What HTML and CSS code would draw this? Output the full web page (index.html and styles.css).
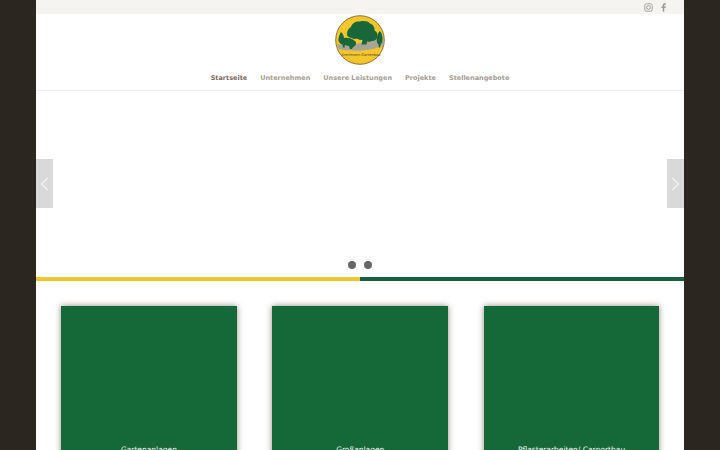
FILE: index.html
```html
<!DOCTYPE html>
<html lang="de">

<head>
    <meta charset="UTF-8">
    <meta name="viewport" content="width=device-width, initial-scale=1.0">
    <title>Gartenbau</title>
    <link rel="stylesheet" href="styles.css">
</head>

<body>
    <div class="page">
        <div class="top-bar">
            <a class="social" href="#">
                <svg width="9" height="9" viewBox="0 0 24 24" fill="none" stroke="currentColor" stroke-width="2.4">
                    <rect x="2" y="2" width="20" height="20" rx="5" />
                    <circle cx="12" cy="12" r="5" />
                    <circle cx="18" cy="6" r="1" fill="currentColor" stroke="none" />
                </svg>
            </a>
            <a class="social" href="#">
                <svg width="9" height="9" viewBox="0 0 24 24" fill="currentColor">
                    <path d="M14 23v-10h3.6l.6-4H14V6.500c0-1.200.4-2 2-2h2.300V1c-.5-.1-1.800-.2-3.200-.2C12 .8 10 2.600 10 6v3H6.500v4H10v10z" />
                </svg>
            </a>
        </div>

        <header class="header">
            <svg class="logo" width="50" height="50" viewBox="0 0 50 50">
                <circle cx="25" cy="25" r="24.300" fill="#f5c52c" stroke="#6b5a2a" stroke-width="0.8" />
                <path d="M2 29c14 2 30-1 46-8l1 9c-6 3-14 5-22 5.500-8 .5-18 0-23-1.500z" fill="#a8a594" />
                <g fill="#17673a">
                    <path d="M12 19c0-4 2-6 4-7 1-4 5-6 9-5.500 3-1 8-.5 10 2 3 1 5 4 4.500 7 2 1 3.500 3 3 6-.5 3-3 5-6 4.500-1 1-3 1-4.500.5l-.5 3h-5l1-4.500c-2 0-4-.5-6-1.500-1 .5-3 .5-4 0-3-1-6-2.500-5.500-4.500z" />
                    <path d="M6 17c1.500 1 3 4 3 6 3-1 8 0 11 3 2 2 1 4.500-1 5.500l-1.500 1.500-.5 1h-2l-1-3c-2 0-3-1-4-1l-.5 2.500H8l-.5-3C5 29 3 26.500 3.500 24c.5-3 1.500-5.500 2.500-7z" />
                    <path d="M44.500 16c2 1 3 4 3 8 0 3-1 5-2 5.500l-.2 3h-1.500l-.2-3c-1.300-.5-2-3-1.800-5.500.2-3.500 1.500-6.500 2.700-8z" />
                </g>
                <text class="logo-text" x="26" y="41" text-anchor="middle">Kreitmann Gartenbau</text>
            </svg>
            <nav class="nav">
                <a class="nav-link active" href="#">Startseite</a>
                <a class="nav-link" href="#">Unternehmen</a>
                <a class="nav-link" href="#">Unsere Leistungen</a>
                <a class="nav-link" href="#">Projekte</a>
                <a class="nav-link" href="#">Stellenangebote</a>
            </nav>
        </header>

        <section class="slider">
            <a class="slide-arrow prev" href="#">
                <svg width="9" height="14" viewBox="0 0 9 14" fill="none" stroke="currentColor" stroke-width="1.200">
                    <polyline points="7.500 1 1.500 7 7.500 13" />
                </svg>
            </a>
            <div class="dots">
                <span class="dot"></span>
                <span class="dot"></span>
            </div>
            <a class="slide-arrow next" href="#">
                <svg width="9" height="14" viewBox="0 0 9 14" fill="none" stroke="currentColor" stroke-width="1.200">
                    <polyline points="1.500 1 7.500 7 1.500 13" />
                </svg>
            </a>
        </section>

        <div class="color-bar">
            <div class="bar-yellow"></div>
            <div class="bar-green"></div>
        </div>

        <section class="cards">
            <div class="card">Gartenanlagen</div>
            <div class="card">Großanlagen</div>
            <div class="card">Pflasterarbeiten/ Carportbau</div>
        </section>
    </div>
</body>

</html>
```

FILE: styles.css
```css
* {
    margin: 0;
    padding: 0;
    box-sizing: border-box;
    font-family: "DejaVu Sans", sans-serif;
    text-rendering: geometricPrecision;
}

html,
body {
    height: 100%;
    overflow: hidden;
}

body {
    background-color: #2b2620;
}

.page {
    width: 648px;
    margin: 0 auto;
    background: #ffffff;
    min-height: 100%;
}

.top-bar {
    height: 14px;
    background: #f6f4f0;
    display: flex;
    justify-content: flex-end;
    align-items: center;
    gap: 6px;
    padding-right: 16px;
}

.social {
    color: #9a9a92;
    display: flex;
    width: 9px;
}

.header {
    height: 77px;
    border-bottom: 1px solid #eeeeee;
    display: flex;
    flex-direction: column;
    align-items: center;
}

.logo {
    margin-top: 1px;
}

.logo-text {
    font-size: 3.600px;
    fill: #4a4a30;
}

.nav {
    display: flex;
    gap: 13px;
    margin-top: 8px;
}

.nav-link {
    font-size: 6.500px;
    line-height: 10px;
    font-weight: 700;
    color: #a59d90;
    text-decoration: none;
}

.nav-link.active {
    color: #7d6a5a;
}

.slider {
    height: 186px;
    position: relative;
}

.slide-arrow {
    position: absolute;
    top: 68px;
    width: 17px;
    height: 49px;
    background: #d9d9d9;
    color: #f4f4f4;
    display: flex;
    align-items: center;
    justify-content: center;
}

.prev {
    left: 0;
}

.next {
    right: 0;
}

.dots {
    position: absolute;
    bottom: 8px;
    left: 0;
    right: 0;
    display: flex;
    justify-content: center;
    gap: 8px;
}

.dot {
    width: 8px;
    height: 8px;
    border-radius: 50%;
    background: #666666;
}

.color-bar {
    display: flex;
    height: 4px;
}

.bar-yellow,
.bar-green {
    flex: 1;
}

.bar-yellow {
    background: #f0c52e;
}

.bar-green {
    background: #17603a;
}

.cards {
    display: flex;
    gap: 35.500px;
    padding: 25px 24.500px 0 25px;
}

.card {
    flex: 1;
    height: 200px;
    padding-top: 138px;
    background: #156837;
    color: #f2f2f2;
    font-size: 7.500px;
    line-height: 11px;
    text-align: center;
    box-shadow: 0 0 6px rgba(60, 40, 20, 0.55);
}
```
